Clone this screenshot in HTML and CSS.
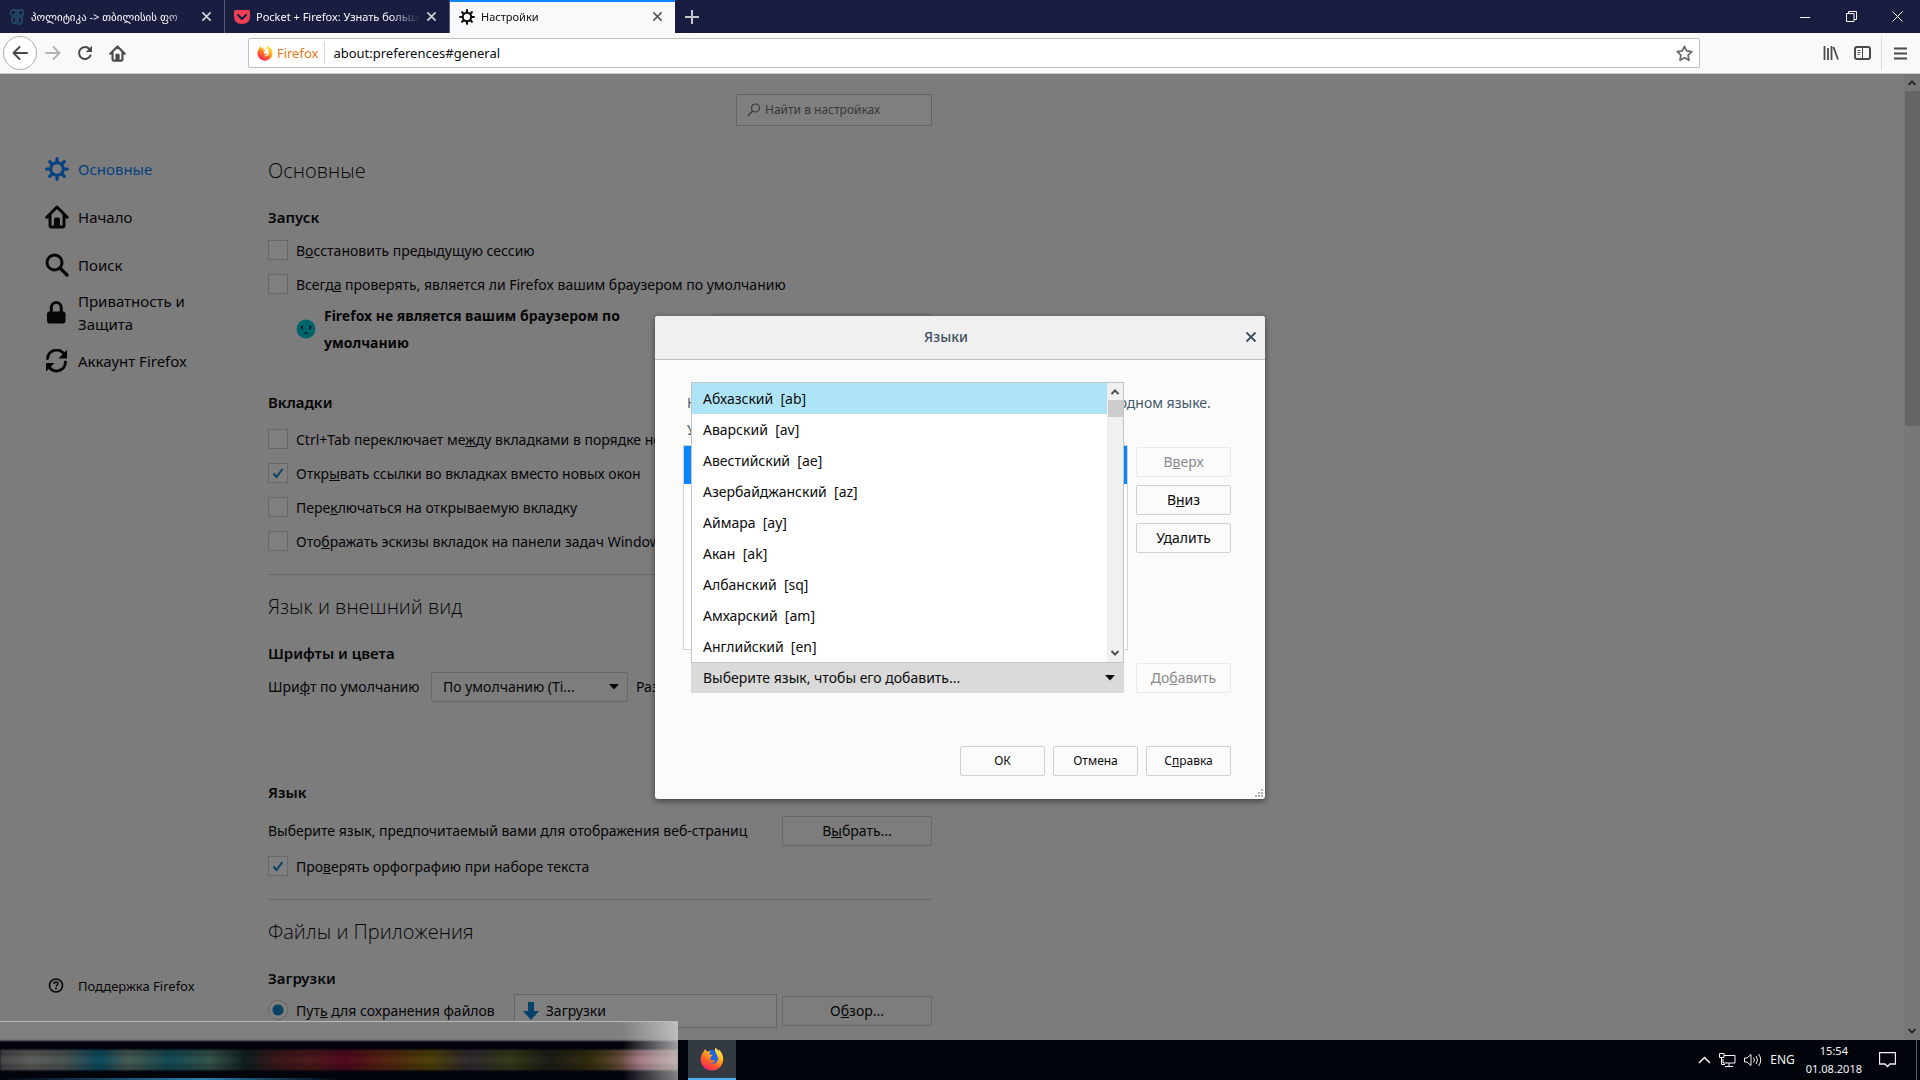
FILE: index.html
```html
<!DOCTYPE html>
<html lang="ru">
<head>
    <meta charset="UTF-8">
    <title>Настройки</title>
    <link rel="stylesheet" href="styles.css">
</head>
<body>
<svg class="defs" width="0" height="0" aria-hidden="true">
    <defs>
        <linearGradient id="fire" x1="0.8" y1="0" x2="0.2" y2="1">
            <stop offset="0" stop-color="#fff44f"/>
            <stop offset="0.35" stop-color="#ffb21c"/>
            <stop offset="0.65" stop-color="#ff5a2a"/>
            <stop offset="1" stop-color="#ff1b6b"/>
        </linearGradient>
        <symbol id="gear" viewBox="0 0 24 24">
            <circle cx="12" cy="12" r="6.3" fill="none" stroke="currentColor" stroke-width="3"/>
            <path d="M12 1.7V5M12 19v3.3M1.7 12H5M19 12h3.3M4.7 4.7L7 7M17 17l2.3 2.3M4.7 19.3L7 17M17 7l2.3-2.3" stroke="currentColor" stroke-width="3.2" stroke-linecap="round"/>
        </symbol>
        <symbol id="home" viewBox="0 0 24 24">
            <path d="M1.8 12.2L12 2l10.2 10.2M5 10v10.5q0 1.5 1.5 1.5h11q1.5 0 1.5-1.5V10" fill="none" stroke="currentColor" stroke-width="3" stroke-linecap="round" stroke-linejoin="round"/>
            <path d="M9 22v-8q0-1.500 1.500-1.500h3q1.500 0 1.500 1.500v8z" fill="currentColor"/>
        </symbol>
        <symbol id="cross" viewBox="0 0 12 12">
            <path d="M1.500 1.500l9 9M10.500 1.500l-9 9" fill="none" stroke="currentColor" stroke-width="1.800"/>
        </symbol>
        <symbol id="up" viewBox="0 0 10 10">
            <path d="M1.500 7L5 3.500 8.500 7" fill="none" stroke="currentColor" stroke-width="2"/>
        </symbol>
        <symbol id="down" viewBox="0 0 10 10">
            <path d="M1.500 3L5 6.500 8.500 3" fill="none" stroke="currentColor" stroke-width="2"/>
        </symbol>
        <symbol id="firefox" viewBox="0 0 24 24">
            <circle cx="12.500" cy="11.500" r="8.500" fill="#1c62e8"/>
            <path d="M3 5.500C4 4 4.600 3 4.800 2c1 .8 1.700 1.700 2.200 2.700C8.500 4 10 4 11 4.500 9.500 5.300 9 6.300 9.500 7.500c1 .4 2.200.3 3.200.6-.2 1-1.700 1.500-2.200 2.400.2 1 .1 1.700-.3 2 1.300 1.500 3.300.2 5 1-.8 2-3 2.900-5 2.500 5 2.700 9-2 7.300-6.500C17 7 14.500 5.500 15 1c2 .5 3 2 3.300 3.300l.7-1.800c4 4.500 5 8.500 3.700 13C21.300 20.300 17 23.500 12 23.500 5.500 23.500.7 18.500.7 12.500.7 10 1.500 7.300 3 5.500z" fill="url(#fire)"/>
        </symbol>
    </defs>
</svg>

<header class="tabbar">
    <div class="tab">
        <svg class="tab-icon teal" viewBox="0 0 16 16"><path d="M3 1h4v5H3.500Q1 6 1.500 3.500T3 1zM9 1h4q2 2 1 5H9zM3 8h4v6q-3 1-4-1.500V8zM9 8h4v5q-1 2.500-4 2z" fill="none" stroke="currentColor" stroke-width="1.500"/></svg>
        <span class="tab-title">პოლიტიკა -&gt; თბილისის ფო</span>
        <button class="icon-btn" aria-label="Закрыть вкладку"><svg width="11" height="11"><use href="#cross"/></svg></button>
    </div>
    <div class="tab">
        <svg class="tab-icon" viewBox="0 0 16 16"><path d="M1.500 1h13Q16 1 16 2.500V7q0 8-8 8T0 7V2.500Q0 1 1.500 1z" fill="#ef4056"/><path d="M4 6l4 4 4-4" fill="none" stroke="#1a1d40" stroke-width="2.200" stroke-linecap="round" stroke-linejoin="round"/></svg>
        <span class="tab-title">Pocket + Firefox: Узнать больше</span>
        <button class="icon-btn" aria-label="Закрыть вкладку"><svg width="11" height="11"><use href="#cross"/></svg></button>
    </div>
    <div class="tab active">
        <svg class="tab-icon"><use href="#gear"/></svg>
        <span class="tab-title">Настройки</span>
        <button class="icon-btn" aria-label="Закрыть вкладку"><svg width="11" height="11"><use href="#cross"/></svg></button>
    </div>
    <button class="icon-btn new-tab" aria-label="Новая вкладка"><svg width="14" height="14" viewBox="0 0 14 14"><path d="M7 0v14M0 7h14" stroke="currentColor" stroke-width="2"/></svg></button>
    <div class="window-buttons">
        <button class="icon-btn" aria-label="Свернуть"><svg width="10" height="10" viewBox="0 0 10 10"><path d="M0 5.500h10" stroke="currentColor"/></svg></button>
        <button class="icon-btn" aria-label="Восстановить"><svg width="11" height="11" viewBox="0 0 11 11"><path d="M.5 2.500h7.500v8H.5zM2.500 2.500v-2h8v8H8" fill="none" stroke="currentColor"/></svg></button>
        <button class="icon-btn" aria-label="Закрыть"><svg width="11" height="11" viewBox="0 0 11 11"><path d="M.5.5l10 10M10.500.5l-10 10" stroke="currentColor"/></svg></button>
    </div>
</header>

<div class="toolbar">
    <button class="icon-btn back" aria-label="Назад"><svg width="16" height="16" viewBox="0 0 16 16"><path d="M15 8H2M7.500 2L1.500 8l6 6" fill="none" stroke="currentColor" stroke-width="2" stroke-linecap="round" stroke-linejoin="round"/></svg></button>
    <button class="icon-btn tool" aria-label="Вперёд" disabled><svg width="16" height="16" viewBox="0 0 16 16"><path d="M1 8h13M8.500 2l6 6-6 6" fill="none" stroke="currentColor" stroke-width="2" stroke-linecap="round" stroke-linejoin="round"/></svg></button>
    <button class="icon-btn tool" aria-label="Обновить"><svg width="16" height="16" viewBox="0 0 16 16"><path d="M13.500 10.500A6 6 0 1 1 12.500 4" fill="none" stroke="currentColor" stroke-width="2" stroke-linecap="round"/><path d="M15 .8V7H8.800z" fill="currentColor"/></svg></button>
    <button class="icon-btn tool" aria-label="Домой"><svg width="17" height="17"><use href="#home"/></svg></button>
    <div class="spacer"></div>
    <div class="urlbar">
        <svg width="16" height="16" viewBox="0 0 24 24"><path d="M3 5.500C4 4 4.600 3 4.800 2c1 .8 1.700 1.700 2.200 2.700C8.500 4 10 4 11 4.500 9.500 5.300 9 6.300 9.500 7.500c1 .4 2.200.3 3.200.6-.2 1-1.700 1.500-2.200 2.400.2 1 .1 1.700-.3 2 1.300 1.500 3.300.2 5 1-.8 2-3 2.900-5 2.500 5 2.700 9-2 7.300-6.500C17 7 14.500 5.500 15 1c2 .5 3 2 3.300 3.300l.7-1.800c4 4.500 5 8.500 3.700 13C21.300 20.300 17 23.500 12 23.500 5.500 23.500.7 18.500.7 12.500.7 10 1.500 7.300 3 5.500z" fill="url(#fire)"/></svg>
        <span class="identity">Firefox</span>
        <input class="url" type="text" value="about:preferences#general" aria-label="Адрес">
        <button class="icon-btn star" aria-label="Добавить в закладки"><svg width="17" height="17" viewBox="0 0 16 16"><path d="M8 1.300l2.100 4.300 4.700.6-3.400 3.300.8 4.700L8 12l-4.200 2.200.8-4.700L1.200 6.200l4.700-.6z" fill="none" stroke="currentColor" stroke-width="1.700" stroke-linejoin="round"/></svg></button>
    </div>
    <div class="spacer"></div>
    <button class="icon-btn tool" aria-label="Библиотека"><svg width="16" height="16" viewBox="0 0 16 16"><path d="M1.500 1v14M5 3v12M8.500 1v14M10.500 2l4.500 12.500" stroke="currentColor" stroke-width="1.800"/></svg></button>
    <button class="icon-btn tool" aria-label="Боковая панель"><svg width="17" height="16" viewBox="0 0 17 16"><rect x="1" y="2" width="15" height="12" rx="2" fill="none" stroke="currentColor" stroke-width="2"/><path d="M8.500 2v12M3.500 5.500h3M3.500 7.500h3M3.500 9.500h2" stroke="currentColor"/></svg></button>
    <span class="tool-sep"></span>
    <button class="icon-btn tool" aria-label="Меню"><svg width="13" height="13" viewBox="0 0 13 13"><path d="M0 1.500h13M0 6.500h13M0 11.500h13" stroke="currentColor" stroke-width="2"/></svg></button>
</div>

<div class="page">
    <nav class="sidebar">
        <a class="nav-item current" href="#general"><svg class="nav-icon"><use href="#gear"/></svg>Основные</a>
        <a class="nav-item" href="#home-page"><svg class="nav-icon"><use href="#home"/></svg>Начало</a>
        <a class="nav-item" href="#search"><svg class="nav-icon" viewBox="0 0 24 24"><circle cx="9.500" cy="9.500" r="7.500" fill="none" stroke="currentColor" stroke-width="3"/><path d="M15 15l7 7" stroke="currentColor" stroke-width="3.200" stroke-linecap="round"/></svg>Поиск</a>
        <a class="nav-item" href="#privacy"><svg class="nav-icon" viewBox="0 0 24 24"><rect x="2" y="10.500" width="18.500" height="12" rx="2.500" fill="currentColor"/><path d="M6.300 12V6.500a4.900 4.900 0 0 1 9.900 0V12" fill="none" stroke="currentColor" stroke-width="3"/></svg>Приватность и Защита</a>
        <a class="nav-item" href="#sync"><svg class="nav-icon" viewBox="0 0 24 24"><path d="M2.500 9.500A9 9 0 0 1 19.500 6M20.500 13A9 9 0 0 1 3.500 17" fill="none" stroke="currentColor" stroke-width="3" stroke-linecap="round"/><path d="M22 .8v8.700h-8.500zM1 22.500V14h8.500z" fill="currentColor"/></svg>Аккаунт Firefox</a>
        <a class="nav-item support" href="#support"><svg class="nav-icon" viewBox="0 0 24 24"><circle cx="11" cy="11.500" r="6.500" fill="none" stroke="currentColor" stroke-width="1.600"/><path d="M9 10q0-2 2-2t2 1.700q0 1-2 2.300" fill="none" stroke="currentColor" stroke-width="1.700"/><circle cx="11" cy="14.500" r="1.100" fill="currentColor"/></svg>Поддержка Firefox</a>
    </nav>

    <main class="content">
        <label class="search">
            <svg width="14" height="14" viewBox="0 0 14 14"><circle cx="8.500" cy="5" r="4" fill="none" stroke="currentColor" stroke-width="1.200"/><path d="M5.700 8L1 12.700" stroke="currentColor" stroke-width="1.400"/></svg>
            <input type="text" placeholder="Найти в настройках" aria-label="Найти в настройках">
        </label>

        <h1>Основные</h1>
        <h2>Запуск</h2>
        <label class="check"><input type="checkbox"><span>В<u>о</u>сстановить предыдущую сессию</span></label>
        <label class="check"><input type="checkbox"><span>Всегд<u>а</u> проверять, является ли Firefox вашим браузером по умолчанию</span></label>
        <div class="default-row">
            <svg width="20" height="20" viewBox="0 0 20 20"><circle cx="10" cy="10" r="9.500" fill="#00c8d7"/><ellipse cx="5.800" cy="8.500" rx="1.200" ry="2.300" fill="#0b3a5c"/><ellipse cx="14.200" cy="8.500" rx="1.200" ry="2.300" fill="#0b3a5c"/><path d="M7.500 15q2.500-3.500 5 0z" fill="#0b3a5c"/></svg>
            <strong>Firefox не является вашим браузером по умолчанию</strong>
            <button class="btn" aria-label="Установить по умолчанию"></button>
        </div>

        <h2 class="tabs-title">Вкладки</h2>
        <label class="check"><input type="checkbox"><span>Ctrl+Tab переключает ме<u>ж</u>ду вкладками в порядке недавнего использования</span></label>
        <label class="check"><input type="checkbox" checked><span>Откр<u>ы</u>вать ссылки во вкладках вместо новых окон</span></label>
        <label class="check"><input type="checkbox"><span>Пере<u>к</u>лючаться на открываемую вкладку</span></label>
        <label class="check"><input type="checkbox"><span>Ото<u>б</u>ражать эскизы вкладок на панели задач Windows</span></label>

        <hr>
        <h1>Язык и внешний вид</h1>
        <h2>Шрифты и цвета</h2>
        <div class="row font-row">
            <label class="font-label" for="font">Шри<u>ф</u>т по умолчанию</label>
            <select id="font"><option>По умолчанию (Ti...</option></select>
            <label for="size">Размер</label>
            <select id="size" class="size"><option>16</option></select>
        </div>

        <h2 class="lang-title">Язык</h2>
        <div class="row">
            <span class="grow">Выберите язык, предпочитаемый вами для отображения веб-страниц</span>
            <button class="btn wide">В<u>ы</u>брать...</button>
        </div>
        <label class="check"><input type="checkbox" checked><span>Про<u>в</u>ерять орфографию при наборе текста</span></label>

        <hr>
        <h1>Файлы и Приложения</h1>
        <h2>Загрузки</h2>
        <div class="row download-row">
            <label class="check"><input type="radio" name="save" checked><span>Пут<u>ь</u> для сохранения файлов</span></label>
            <div class="folder">
                <svg width="16" height="18" viewBox="0 0 16 18"><path d="M5 0h6v9h5l-8 9-8-9h5z" fill="#0a84d8"/></svg>
                <input type="text" value="Загрузки" aria-label="Папка загрузок" readonly>
            </div>
            <button class="btn wide">О<u>б</u>зор...</button>
        </div>
    </main>

    <div class="scrollbar">
        <svg width="10" height="10"><use href="#up"/></svg>
        <div class="thumb"></div>
        <svg width="10" height="10"><use href="#down"/></svg>
    </div>

    <div class="overlay">
        <section class="dialog" role="dialog" aria-labelledby="dialog-title">
            <header class="dialog-head">
                <span id="dialog-title">Языки</span>
                <button class="icon-btn" aria-label="Закрыть"><svg width="12" height="12"><use href="#cross"/></svg></button>
            </header>
            <div class="dialog-body">
                <p>Некоторые веб-страницы могут быть доступны больше чем на одном языке.<br>Укажите языки в порядке предпочтения</p>
                <div class="lang-grid">
                    <div class="lang-list"><div class="lang-row"></div></div>
                    <div class="side-buttons">
                        <button class="btn" disabled>В<u>в</u>ерх</button>
                        <button class="btn">В<u>н</u>из</button>
                        <button class="btn">У<u>д</u>алить</button>
                    </div>
                    <div class="picker">
                        <select class="picker-select" aria-label="Язык"><option>Выберите язык, чтобы его добавить...</option></select>
                        <div class="popup">
                            <ul role="listbox">
                                <li role="option" class="hover" aria-selected="true">Абхазский&nbsp; [ab]</li>
                                <li role="option">Аварский&nbsp; [av]</li>
                                <li role="option">Авестийский&nbsp; [ae]</li>
                                <li role="option">Азербайджанский&nbsp; [az]</li>
                                <li role="option">Аймара&nbsp; [ay]</li>
                                <li role="option">Акан&nbsp; [ak]</li>
                                <li role="option">Албанский&nbsp; [sq]</li>
                                <li role="option">Амхарский&nbsp; [am]</li>
                                <li role="option">Английский&nbsp; [en]</li>
                            </ul>
                            <div class="scrollbar small">
                                <svg width="10" height="10"><use href="#up"/></svg>
                                <div class="thumb"></div>
                                <svg width="10" height="10"><use href="#down"/></svg>
                            </div>
                        </div>
                    </div>
                    <button class="btn" disabled>До<u>б</u>авить</button>
                </div>
                <div class="dialog-buttons">
                    <button class="btn">ОК</button>
                    <button class="btn">Отмена</button>
                    <button class="btn">С<u>п</u>равка</button>
                </div>
            </div>
            <svg class="grip" width="8" height="8" viewBox="0 0 8 8"><path d="M6 0h2v2H6zM3 3h2v2H3zM6 3h2v2H6zM0 6h2v2H0zM3 6h2v2H3zM6 6h2v2H6z" fill="#b0b0b0"/></svg>
        </section>
    </div>
</div>

<footer class="taskbar">
    <button class="icon-btn task" aria-label="Firefox"><svg width="24" height="24"><use href="#firefox"/></svg></button>
    <div class="tray">
        <svg width="13" height="8" viewBox="0 0 13 8"><path d="M1 7l5.500-5.500L12 7" fill="none" stroke="currentColor" stroke-width="1.500"/></svg>
        <svg width="17" height="14" viewBox="0 0 17 14"><path d="M5 2.500h11v7.500H4V6M10 10v3M6 13.500h8M.5.5H5v4H.5zM2.500 4.500v7H6" fill="none" stroke="currentColor"/></svg>
        <svg width="18" height="14" viewBox="0 0 18 14"><path d="M.5 5v4H3l4 3.500v-11L3 5zM9.500 4.500q2 2.500 0 5M12 3q3 4 0 8M14.500 1q4.500 6 0 12" fill="none" stroke="currentColor"/></svg>
        <span>ENG</span>
        <time class="clock">15:54<br>01.08.2018</time>
        <svg width="17" height="16" viewBox="0 0 17 16"><path d="M.5.5h16v11.500H11L8.500 14.500 6 12H.5z" fill="none" stroke="currentColor" stroke-width="1.300"/></svg>
        <span class="show-desktop"></span>
    </div>
</footer>

<div class="preview-strip">
    <div class="strip-colors"></div>
    <div class="strip-fade"></div>
</div>
</body>
</html>
```
FILE: styles.css
```css
* {
    box-sizing: border-box;
}

body {
    display: flex;
    flex-direction: column;
    height: 100vh;
    margin: 0;
    overflow: hidden;
    font: 14px/22px "Noto Sans", "DejaVu Sans", sans-serif;
    color: #0c0c0d;
}

button, input, select {
    font: inherit;
    color: inherit;
}

.defs {
    position: absolute;
}

.icon-btn {
    display: flex;
    align-items: center;
    justify-content: center;
    padding: 0;
    border: 0;
    background: none;
}

/* tabs */
.tabbar {
    display: flex;
    flex: none;
    height: 33px;
    background: #1a1d40;
    color: #f9f9fa;
    font-size: 11px;
}

.tab {
    display: flex;
    align-items: center;
    width: 225px;
    padding: 0 12px 0 9px;
    border-right: 1px solid #5a5c75;
}

.tab .icon-btn {
    color: #d0d1da;
}

.tab-icon {
    flex: none;
    width: 16px;
    height: 16px;
    margin-right: 6px;
}

.teal {
    color: #23506f;
}

.tab-title {
    flex: 1;
    overflow: hidden;
    white-space: nowrap;
    margin-right: 6px;
    mask-image: linear-gradient(to left, transparent, #000 30px);
}

.tab.active {
    padding-bottom: 2px;
    background: #f9f9fb;
    color: #0c0c0d;
    border-top: 2px solid #0a84ff;
    border-right: 0;
}

.tab.active .icon-btn {
    color: #5a5a5c;
}

.new-tab {
    width: 34px;
    color: #c5c6d0;
}

.window-buttons {
    display: flex;
    margin-left: auto;
}

.window-buttons .icon-btn {
    width: 46px;
}

/* toolbar */
.toolbar {
    display: flex;
    flex: none;
    align-items: center;
    height: 41px;
    padding: 0 3px;
    background: #f9f9fb;
    border-bottom: 1px solid #ccc;
    color: #4a4a4d;
}

.back {
    width: 34px;
    height: 34px;
    border: 1px solid #b1b1b3;
    border-radius: 50%;
    background: #fff;
}

.tool {
    width: 32px;
    height: 32px;
}

.tool:disabled {
    color: #b5b5b7;
}

.spacer {
    flex: 2;
}

.tool-sep {
    width: 1px;
    height: 34px;
    margin: 0 3px 0 2px;
    background: #dcdcde;
}

.urlbar {
    display: flex;
    flex: 25;
    align-items: center;
    height: 30px;
    padding: 0 6px 0 8px;
    background: #fff;
    border: 1px solid #bebec0;
    border-radius: 2px;
    font-size: 13px;
}

.identity {
    margin-left: 4px;
    padding-right: 6px;
    border-right: 1px solid #d7d7db;
    color: #e67817;
}

.url {
    flex: 1;
    border: 0;
    padding: 0 8px;
    color: #0c0c0d;
    outline: 0;
}

.star {
    color: #6a6a6d;
}

/* preferences page */
.page {
    position: relative;
    display: flex;
    flex: 1;
    min-height: 0;
    overflow: hidden;
    background: #f9f9fb;
}

.sidebar {
    display: flex;
    flex-direction: column;
    flex: none;
    width: 268px;
    padding: 71px 60px 30px 45px;
}

.nav-item {
    display: flex;
    align-items: center;
    height: 48px;
    color: #0c0c0d;
    font-size: 15px;
    line-height: 23px;
    text-decoration: none;
}

.nav-icon {
    flex: none;
    width: 24px;
    height: 24px;
    margin-right: 9px;
}

.current {
    color: #0a84ff;
}

.support {
    margin-top: auto;
    font-size: 13px;
}

.content {
    width: 664px;
    padding-top: 20px;
}

.search {
    display: flex;
    align-items: center;
    width: 196px;
    height: 32px;
    margin-left: auto;
    padding: 0 10px;
    border: 1px solid #c8c8ca;
    background: #fff;
    color: #737373;
    font-size: 12px;
}

.search input {
    width: 150px;
    padding: 0 4px;
    border: 0;
    background: none;
}

.search input::placeholder {
    color: #737373;
}

h1 {
    margin: 17px 0 20px;
    font: 300 20px/30px "Open Sans", "Noto Sans", sans-serif;
}

.search + h1 {
    margin-top: 30px;
}

h2 {
    margin: 0 0 6px;
    font-size: 15px;
    font-weight: 600;
    line-height: 22px;
}

hr {
    height: 1px;
    margin: 15px 0 0;
    border: 0;
    background: #d0d0d2;
}

.check {
    display: flex;
    align-items: center;
    height: 34px;
    white-space: nowrap;
}

.row + .check {
    margin-top: 3px;
}

.check input {
    appearance: none;
    flex: none;
    width: 20px;
    height: 20px;
    margin: 0 8px 2px 0;
    border: 1px solid #d0d0d2;
    background: #fff;
}

.check input:checked {
    background: #fff url("data:image/svg+xml,%3Csvg xmlns='http://www.w3.org/2000/svg' viewBox='0 0 18 18'%3E%3Cpath d='M4.500 9.500l3 3.500L13.500 5' fill='none' stroke='%230a84c8' stroke-width='2'/%3E%3C/svg%3E");
}

.check input[type="radio"] {
    border-radius: 50%;
    background: #fff;
}

.check input[type="radio"]:checked {
    background: radial-gradient(circle, #0a84c8 5px, #fff 6px);
}

.default-row {
    display: flex;
    align-items: center;
    height: 54px;
    padding-left: 28px;
}

.default-row strong {
    width: 330px;
    margin: 0 auto 0 8px;
    font-weight: 700;
    line-height: 27px;
}

.default-row .btn {
    width: 219px;
}

.tabs-title {
    margin: 35px 0 10px;
}

.lang-title {
    margin: 78px 0 12px;
}

.row {
    display: flex;
    align-items: center;
    height: 32px;
    white-space: nowrap;
}

.grow {
    flex: 1;
}

.font-row {
    gap: 8px;
    margin-top: 7px;
}

.font-label {
    min-width: 155px;
}

select {
    appearance: none;
    width: 197px;
    height: 30px;
    padding: 0 26px 0 11px;
    border: 1px solid #d0d0d2;
    border-radius: 2px;
    background: #fbfbfb url("data:image/svg+xml,%3Csvg xmlns='http://www.w3.org/2000/svg' width='10' height='6'%3E%3Cpath d='M0 0h10L5 5.500z' fill='%230c0c0d'/%3E%3C/svg%3E") no-repeat right 8px center;
}

.size {
    width: 70px;
}

.btn {
    height: 30px;
    padding: 0 8px;
    border: 1px solid #d0d0d2;
    border-radius: 2px;
    background: #fbfbfb;
    white-space: nowrap;
}

.btn:disabled {
    color: #8a8a8c;
    border-color: #e9e9ec;
}

.wide {
    width: 150px;
}

.download-row {
    gap: 5px;
}

.folder {
    display: flex;
    flex: 1;
    align-items: center;
    height: 34px;
    margin-left: 14px;
    padding: 0 8px;
    border: 1px solid #c8c8ca;
    background: #fff;
}

.folder input {
    flex: 1;
    width: 100px;
    border: 0;
    padding: 0 7px;
    background: none;
}

.scrollbar {
    display: flex;
    flex-direction: column;
    align-items: center;
    width: 16px;
    margin-left: auto;
    padding: 4px 0;
    background: #f0f0f0;
    color: #505050;
}

.thumb {
    width: 15px;
    height: 35%;
    margin: 3px 0 auto;
    background: #cdcdcd;
}

.overlay {
    position: absolute;
    inset: 0;
    display: flex;
    align-items: center;
    justify-content: center;
    background: rgba(0, 0, 0, 0.5);
}

/* languages dialog */
.dialog {
    position: relative;
    width: 610px;
    border-radius: 3px;
    background: #fbfbfb;
    box-shadow: 0 2px 6px rgba(0, 0, 0, 0.5);
}

.dialog-head {
    display: flex;
    align-items: center;
    height: 44px;
    padding: 0 8px;
    border-bottom: 1px solid #c1c1c1;
    border-radius: 3px 3px 0 0;
    background: #f0f0f1;
    color: #3d5060;
}

.dialog-head span {
    flex: 1;
    padding-right: 16px;
    font-weight: 500;
    text-align: center;
}

.dialog-body {
    padding: 29px 34px 23px 28px;
}

.dialog-body p {
    margin: 0 0 2px;
    padding-left: 4px;
    color: #46596a;
    line-height: 27px;
    white-space: nowrap;
}

.lang-grid {
    display: grid;
    grid-template-columns: 1fr 95px;
    gap: 13px 8px;
}

.lang-list {
    height: 205px;
    border: 1px solid #d4d4d8;
    background: #fff;
}

.lang-row {
    height: 38px;
    background: #0a84ff;
}

.side-buttons {
    display: flex;
    flex-direction: column;
    gap: 8px;
    padding-top: 2px;
}

.picker {
    position: relative;
    margin: 0 4px 0 8px;
}

.picker-select {
    display: block;
    width: 100%;
    border-color: #dadada;
    border-radius: 0;
    background-color: #dadada;
}

.popup {
    position: absolute;
    right: 0;
    bottom: 100%;
    left: 0;
    display: flex;
    border: 1px solid #c4c4c4;
    background: #fff;
}

.popup ul {
    flex: 1;
    margin: 0;
    padding: 0;
    list-style: none;
}

.popup li {
    padding: 2px 11px 2px;
    line-height: 27px;
}

.popup .hover {
    background: #aee5f6;
}

.small .thumb {
    height: 17px;
}

.dialog-buttons {
    display: flex;
    justify-content: flex-end;
    gap: 8px;
    margin-top: 53px;
    font-size: 12px;
}

.dialog-buttons .btn {
    width: 85px;
}

.grip {
    position: absolute;
    right: 2px;
    bottom: 2px;
}

/* taskbar */
.taskbar {
    display: flex;
    flex: none;
    align-items: center;
    height: 40px;
    padding-left: 688px;
    background: #02040c;
    color: #f4f4f4;
    font-size: 12px;
}

.task {
    width: 48px;
    height: 40px;
    border-bottom: 2px solid #4cb0ee;
    background: #333a41;
}

.tray {
    display: flex;
    align-items: center;
    gap: 8px;
    height: 40px;
    margin-left: auto;
}

.clock {
    margin: 0 9px 0 3px;
    font-size: 11px;
    line-height: 18px;
    text-align: center;
}

.show-desktop {
    width: 4px;
    height: 40px;
    margin-left: 12px;
    border-left: 1px solid #5a5c62;
}

/* blurred window previews over the left part of the taskbar */
.preview-strip {
    position: absolute;
    bottom: 0;
    left: 0;
    width: 678px;
    height: 59px;
    overflow: hidden;
    border-top: 1px solid #b8b8b8;
    background: linear-gradient(#808081 17px, #6c6c6d 18px, #02040c 20px);
}

.strip-colors {
    height: 20px;
    margin-top: 28px;
    filter: blur(1px);
    background:
        linear-gradient(rgba(0, 0, 0, 0) 2px, rgba(0, 0, 0, 0.35) 3px, rgba(0, 0, 0, 0) 7px, rgba(0, 0, 0, 0) 13px, rgba(0, 0, 0, 0.35) 17px, rgba(0, 0, 0, 0) 18px),
        linear-gradient(to right, #45484a, #5c5e5c 30px, #4a5552 65px, #0a4a5e 100px, #485b52 128px, #124a55 170px, #36544a 210px, #101e1f 245px, #3c1719 280px, #4e1a1c 310px, #50091f 345px, #552012 380px, #4c4108 430px, #2f2931 470px, #353a17 510px, #1c1c18 550px, #322c0c 590px, #55432a 612px, #9a6572 640px, #b07f80 678px);
}

.preview-strip::after {
    content: "";
    display: block;
    width: 340px;
    height: 4px;
    margin-top: 8px;
    background: linear-gradient(to right, transparent, #2a7fb0 60%, transparent);
}

.strip-fade {
    position: absolute;
    top: 0;
    right: 0;
    width: 56px;
    height: 59px;
    background: linear-gradient(to right, transparent, rgba(200, 200, 200, 0.9));
    mask-image: linear-gradient(#000, rgba(0, 0, 0, 0.7));
}
```
